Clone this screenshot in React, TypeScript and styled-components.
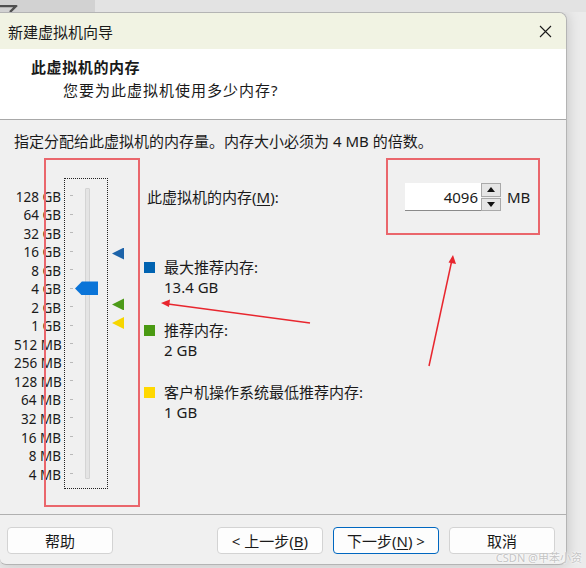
import React from "react";
import styled, { createGlobalStyle } from "styled-components";

const GlobalStyle = createGlobalStyle`
  body {
    margin: 0;
    background: #ebebeb;
    font-family: "Noto Sans", "Noto Sans CJK SC", sans-serif;
    color: #1a1a1a;
  }
`;

const STEP = 18.53;
const FIRST = 7.5;

const scaleLabels = [
  "128 GB", "64 GB", "32 GB", "16 GB", "8 GB", "4 GB", "2 GB", "1 GB",
  "512 MB", "256 MB", "128 MB", "64 MB", "32 MB", "16 MB", "8 MB", "4 MB",
];

// position on the log scale: 128 GB = 2^17 MB sits at index 0
const indexOf = (mb: number) => 17 - Math.log2(mb);
const centerOf = (mb: number) => FIRST + STEP * (indexOf(mb) + 0.5);

const Page = styled.div`
  position: relative;
  width: 586px;
  height: 568px;
  overflow: hidden;
`;

const BackStrip = styled.div`
  display: flex;
  height: 12px;
`;

const BackTab = styled.div`
  width: 95px;
  background: #d2d2d2;
  overflow: hidden;
`;

const BackRest = styled.div`
  flex: 1;
  background: #e3e3e3;
`;

const Dialog = styled.div`
  box-sizing: border-box;
  width: 567px;
  height: 553px;
  display: flex;
  flex-direction: column;
  border: 1px solid #b4b4b4;
  border-left: none;
  border-radius: 0 8px 8px 6px;
  background: #f0f0f0;
  box-shadow: 0 0 14px rgba(0, 0, 0, 0.18);
  overflow: hidden;
`;

const TitleBar = styled.div`
  height: 36px;
  display: flex;
  align-items: center;
  justify-content: space-between;
  padding: 0 14px 0 8px;
  background: #f1f3e3;
  font-size: 15px;
`;

const Close = styled.div`
  width: 13px;
  height: 13px;
  display: flex;
  margin-top: 1px;
`;

const Header = styled.div`
  height: 71px;
  box-sizing: border-box;
  padding-top: 8px;
  background: #fff;
  border-bottom: 1px solid #a8a8a8;
  font-size: 15px;
  line-height: 20px;
`;

const HeaderTitle = styled.div`
  padding-left: 31px;
  font-weight: 700;
  letter-spacing: 0.6px;
`;

const HeaderSub = styled.div`
  padding-left: 63px;
  margin-top: 3px;
  letter-spacing: 1px;
`;

const Body = styled.div`
  flex: 1;
  padding: 11px 0 0 14px;
  font-size: 15px;
  line-height: 20px;
`;

const Content = styled.div`
  display: flex;
  margin-top: 27px;
`;

const Scale = styled.div`
  display: flex;
  align-items: flex-start;
`;

const ScaleLabels = styled.div`
  width: 47px;
  margin-top: 9.8px;
  text-align: right;
  font-size: 13.5px;
`;

const ScaleLabel = styled.div`
  height: ${STEP}px;
  line-height: ${STEP}px;
  white-space: nowrap;
`;

const SliderBox = styled.div`
  position: relative;
  box-sizing: border-box;
  width: 44px;
  height: 311px;
  margin-left: 3px;
  display: flex;
  border: 1px dotted #222;
`;

const Ticks = styled.div`
  width: 3px;
  margin-left: 5px;
  padding-top: ${FIRST}px;
`;

const Tick = styled.div`
  height: ${STEP}px;
  display: flex;
  align-items: center;

  &::before {
    content: "";
    width: 3px;
    height: 1px;
    background: #b9b9b9;
  }
`;

const Track = styled.div`
  box-sizing: border-box;
  width: 5px;
  height: 291px;
  margin: 9px 0 0 12px;
  background: #e4e4e4;
  border: 1px solid #d4d4d4;
  border-radius: 1px;
`;

const Thumb = styled.div`
  position: absolute;
  left: 10px;
  width: 23px;
  height: 14px;
  background: #0a74d8;
  clip-path: polygon(0 50%, 30% 0, 100% 0, 100% 100%, 30% 100%);
`;

const Markers = styled.div`
  position: relative;
  width: 36px;
  height: 311px;
`;

const Marker = styled.div<{ $color: string }>`
  position: absolute;
  left: 4px;
  width: 12px;
  height: 12px;
  background: ${({ $color }) => $color};
  clip-path: polygon(0 50%, 100% 0, 100% 100%);
`;

const Side = styled.div`
  display: flex;
  flex-direction: column;
`;

const MemRow = styled.div`
  display: flex;
  align-items: center;
  height: 28px;
  margin-top: 5px;
`;

const FieldLabel = styled.div`
  width: 258px;
  padding-left: 3px;
  u {
    text-decoration-thickness: 1px;
    text-underline-offset: 2px;
  }
`;

const SpinInput = styled.div`
  box-sizing: border-box;
  width: 76px;
  height: 28px;
  padding-right: 3px;
  display: flex;
  align-items: center;
  justify-content: flex-end;
  background: #fff;
  border-bottom: 1px solid #8a8a8a;
`;

const SpinButtons = styled.div`
  display: flex;
  flex-direction: column;
  gap: 1px;
  width: 20px;
  height: 28px;
`;

const SpinButton = styled.div`
  box-sizing: border-box;
  flex: 1;
  display: flex;
  align-items: center;
  justify-content: center;
  background: #e5e5e5;
  border: 1px solid #a9a9a9;
`;

const Unit = styled.div`
  margin-left: 6px;
`;

const Legend = styled.div`
  display: flex;
  flex-direction: column;
  gap: 22.5px;
  margin-top: 46px;
`;

const LegendItem = styled.div`
  display: flex;
  align-items: flex-start;
`;

const Swatch = styled.div<{ $color: string }>`
  width: 11px;
  height: 11px;
  margin: 5px 9px 0 0;
  background: ${({ $color }) => $color};
`;

const Footer = styled.div`
  height: 50px;
  box-sizing: border-box;
  display: flex;
  align-items: flex-start;
  padding: 12px 11px 0 7px;
  border-top: 1px solid #b0b0b0;
`;

const ButtonGroup = styled.div`
  display: flex;
  gap: 10px;
  margin-left: auto;
`;

const Button = styled.div<{ $primary?: boolean }>`
  box-sizing: border-box;
  width: 106px;
  height: 27px;
  display: flex;
  align-items: center;
  justify-content: center;
  background: #fdfdfd;
  border: 1px solid ${({ $primary }) => ($primary ? "#0067c0" : "#d3d3d3")};
  border-radius: 4px;
  font-size: 15px;
  u {
    text-decoration-thickness: 1px;
    text-underline-offset: 2px;
  }
`;

const Annotations = styled.svg`
  position: absolute;
  inset: 0;
  pointer-events: none;
`;

const Watermark = styled.div`
  position: absolute;
  right: 4px;
  bottom: 3px;
  font-size: 11px;
  color: #c4c4c4;
  text-shadow: 0 0 2px #fff, 0 0 2px #fff;
`;

const markers = [
  { mb: 13.4 * 1024, color: "#1d63a9" },
  { mb: 2048, color: "#4c9a18" },
  { mb: 1024, color: "#f6d600" },
];

const legend = [
  { color: "#0063b1", title: "最大推荐内存:", value: "13.4 GB" },
  { color: "#4a9a12", title: "推荐内存:", value: "2 GB" },
  { color: "#ffd800", title: "客户机操作系统最低推荐内存:", value: "1 GB" },
];

export default function App() {
  const memory = 4096;

  return (
    <Page>
      <GlobalStyle />
      <BackStrip>
        <BackTab>
          <svg width="20" height="12" viewBox="0 0 20 12">
            <path d="M0 1 H15 M9 -5 L16 1 L10 7" fill="none" stroke="#505050" strokeWidth="2.4" />
          </svg>
        </BackTab>
        <BackRest />
      </BackStrip>

      <Dialog>
        <TitleBar>
          <span>新建虚拟机向导</span>
          <Close>
            <svg width="13" height="13" viewBox="0 0 13 13">
              <path d="M1 1 L12 12 M12 1 L1 12" stroke="#1a1a1a" strokeWidth="1.1" />
            </svg>
          </Close>
        </TitleBar>

        <Header>
          <HeaderTitle>此虚拟机的内存</HeaderTitle>
          <HeaderSub>您要为此虚拟机使用多少内存?</HeaderSub>
        </Header>

        <Body>
          <div>指定分配给此虚拟机的内存量。内存大小必须为 4 MB 的倍数。</div>
          <Content>
            <Scale>
              <ScaleLabels>
                {scaleLabels.map((l) => (
                  <ScaleLabel key={l}>{l}</ScaleLabel>
                ))}
              </ScaleLabels>
              <SliderBox>
                <Ticks>
                  {scaleLabels.map((l) => (
                    <Tick key={l} />
                  ))}
                </Ticks>
                <Track />
                <Thumb style={{ top: centerOf(memory) - 7 }} />
              </SliderBox>
              <Markers>
                {markers.map((m) => (
                  <Marker key={m.color} $color={m.color} style={{ top: centerOf(m.mb) - 7.5 }} />
                ))}
              </Markers>
            </Scale>

            <Side>
              <MemRow>
                <FieldLabel>
                  此虚拟机的内存(<u>M</u>):
                </FieldLabel>
                <SpinInput>{memory}</SpinInput>
                <SpinButtons>
                  <SpinButton>
                    <svg width="8" height="5" viewBox="0 0 8 5">
                      <path d="M0 5 L4 0 L8 5 Z" fill="#111" />
                    </svg>
                  </SpinButton>
                  <SpinButton>
                    <svg width="8" height="5" viewBox="0 0 8 5">
                      <path d="M0 0 L8 0 L4 5 Z" fill="#111" />
                    </svg>
                  </SpinButton>
                </SpinButtons>
                <Unit>MB</Unit>
              </MemRow>

              <Legend>
                {legend.map((item) => (
                  <LegendItem key={item.title}>
                    <Swatch $color={item.color} />
                    <div>
                      <div>{item.title}</div>
                      <div>{item.value}</div>
                    </div>
                  </LegendItem>
                ))}
              </Legend>
            </Side>
          </Content>
        </Body>

        <Footer>
          <Button>帮助</Button>
          <ButtonGroup>
            <Button>
              &lt; 上一步(<u>B</u>)
            </Button>
            <Button $primary>
              下一步(<u>N</u>) &gt;
            </Button>
            <Button>取消</Button>
          </ButtonGroup>
        </Footer>
      </Dialog>

      {/* red annotation marks drawn over the screenshot */}
      <Annotations width="586" height="568" viewBox="0 0 586 568">
        <rect x="45" y="159" width="94" height="347" fill="none" stroke="#ea666c" strokeWidth="2" />
        <rect x="387" y="159" width="152" height="75" fill="none" stroke="#ea666c" strokeWidth="2" />
        <line x1="310" y1="323" x2="168" y2="304" stroke="#e8262e" strokeWidth="1.5" />
        <path d="M161 303 L170 299.5 L169 307 Z" fill="#e8262e" />
        <line x1="429" y1="366" x2="451.5" y2="262" stroke="#e8262e" strokeWidth="1.5" />
        <path d="M453 255 L456 264 L448.5 262.5 Z" fill="#e8262e" />
      </Annotations>

      <Watermark>CSDN @甲苯小资</Watermark>
    </Page>
  );
}
